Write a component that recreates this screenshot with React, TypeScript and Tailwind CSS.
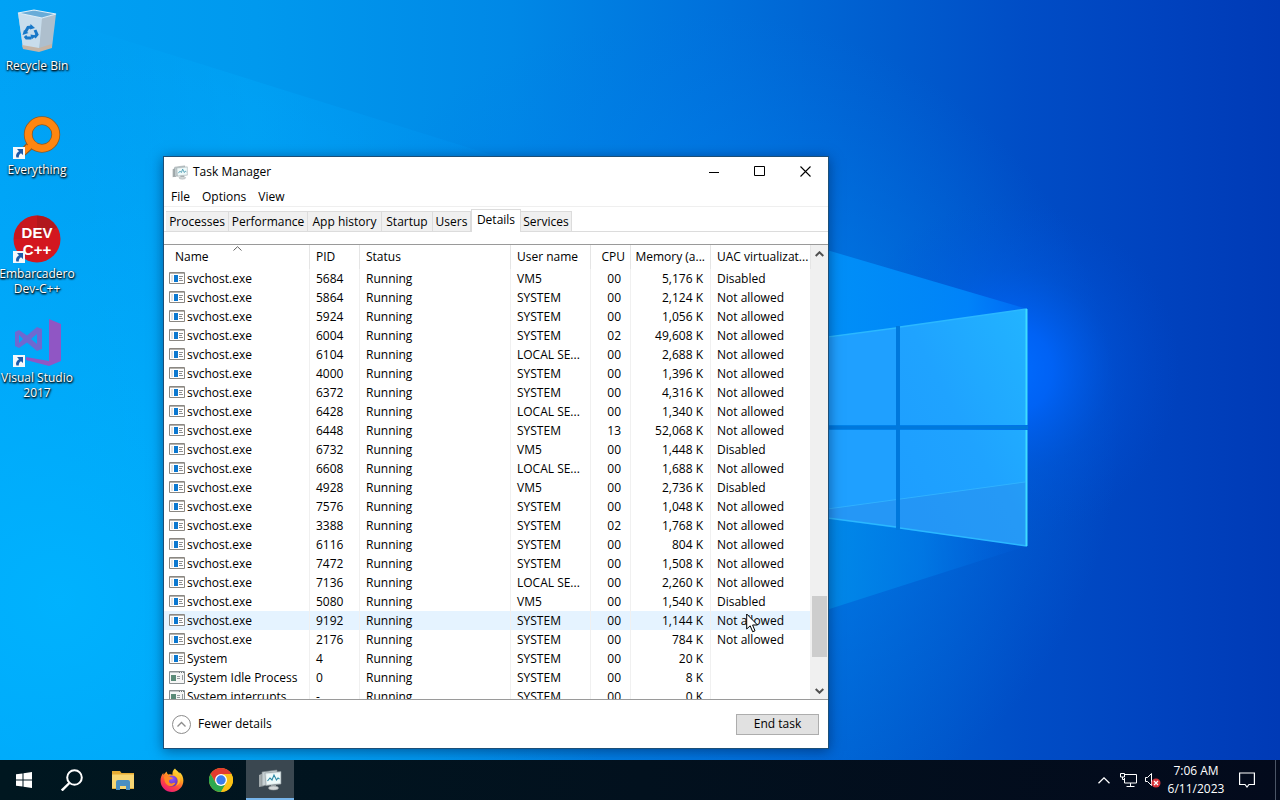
import type { ReactNode } from "react";

type Row = [name: string, pid: string, user: string, cpu: string, memory: string, uac: string];

const ROWS: Row[] = [
  ["svchost.exe", "5684", "VM5", "00", "5,176 K", "Disabled"],
  ["svchost.exe", "5864", "SYSTEM", "00", "2,124 K", "Not allowed"],
  ["svchost.exe", "5924", "SYSTEM", "00", "1,056 K", "Not allowed"],
  ["svchost.exe", "6004", "SYSTEM", "02", "49,608 K", "Not allowed"],
  ["svchost.exe", "6104", "LOCAL SE...", "00", "2,688 K", "Not allowed"],
  ["svchost.exe", "4000", "SYSTEM", "00", "1,396 K", "Not allowed"],
  ["svchost.exe", "6372", "SYSTEM", "00", "4,316 K", "Not allowed"],
  ["svchost.exe", "6428", "LOCAL SE...", "00", "1,340 K", "Not allowed"],
  ["svchost.exe", "6448", "SYSTEM", "13", "52,068 K", "Not allowed"],
  ["svchost.exe", "6732", "VM5", "00", "1,448 K", "Disabled"],
  ["svchost.exe", "6608", "LOCAL SE...", "00", "1,688 K", "Not allowed"],
  ["svchost.exe", "4928", "VM5", "00", "2,736 K", "Disabled"],
  ["svchost.exe", "7576", "SYSTEM", "00", "1,048 K", "Not allowed"],
  ["svchost.exe", "3388", "SYSTEM", "02", "1,768 K", "Not allowed"],
  ["svchost.exe", "6116", "SYSTEM", "00", "804 K", "Not allowed"],
  ["svchost.exe", "7472", "SYSTEM", "00", "1,508 K", "Not allowed"],
  ["svchost.exe", "7136", "LOCAL SE...", "00", "2,260 K", "Not allowed"],
  ["svchost.exe", "5080", "VM5", "00", "1,540 K", "Disabled"],
  ["svchost.exe", "9192", "SYSTEM", "00", "1,144 K", "Not allowed"],
  ["svchost.exe", "2176", "SYSTEM", "00", "784 K", "Not allowed"],
  ["System", "4", "SYSTEM", "00", "20 K", ""],
  ["System Idle Process", "0", "SYSTEM", "00", "8 K", ""],
  ["System interrupts", "-", "SYSTEM", "00", "0 K", ""],
];

const TABS = [
  { label: "Processes", width: "w-[63px]" },
  { label: "Performance", width: "w-[79px]" },
  { label: "App history", width: "w-[74px]" },
  { label: "Startup", width: "w-[51px]" },
  { label: "Users", width: "w-[38px]" },
  { label: "Details", width: "w-[50px]" },
  { label: "Services", width: "w-[51px]" },
];

function Wallpaper() {
  return (
    <svg
      className="absolute inset-0 h-full w-full"
      viewBox="0 0 1280 800"
      preserveAspectRatio="none"
      aria-hidden="true"
    >
      <defs>
        <linearGradient id="base" x1="0" y1="0" x2="1" y2="0">
          <stop offset="0" stopColor="#00a2f5" />
          <stop offset="0.2" stopColor="#0099ee" />
          <stop offset="0.4" stopColor="#0088e6" />
          <stop offset="0.55" stopColor="#0072dc" />
          <stop offset="0.7" stopColor="#005cce" />
          <stop offset="0.8" stopColor="#004dc6" />
          <stop offset="0.9" stopColor="#0043bf" />
          <stop offset="1" stopColor="#003ab6" />
        </linearGradient>
        <radialGradient id="cyan" gradientUnits="userSpaceOnUse" cx="60" cy="600" r="560">
          <stop offset="0" stopColor="#00b4ff" stopOpacity="0.9" />
          <stop offset="1" stopColor="#00acff" stopOpacity="0" />
        </radialGradient>
        <radialGradient id="mid" gradientUnits="userSpaceOnUse" cx="700" cy="430" r="420">
          <stop offset="0" stopColor="#0090f5" stopOpacity="0.9" />
          <stop offset="1" stopColor="#0078ea" stopOpacity="0" />
        </radialGradient>
        <radialGradient id="glow" gradientUnits="userSpaceOnUse" cx="1010" cy="370" r="170">
          <stop offset="0" stopColor="#006cff" stopOpacity="1" />
          <stop offset="0.25" stopColor="#0066ff" stopOpacity="0.8" />
          <stop offset="0.6" stopColor="#005ae8" stopOpacity="0.3" />
          <stop offset="1" stopColor="#0050d8" stopOpacity="0" />
        </radialGradient>
        <linearGradient id="beam" gradientUnits="userSpaceOnUse" x1="830" y1="0" x2="1027" y2="0">
          <stop offset="0" stopColor="#0092fa" stopOpacity="0.9" />
          <stop offset="0.7" stopColor="#008cff" stopOpacity="0.8" />
          <stop offset="1" stopColor="#0078ff" stopOpacity="0.5" />
        </linearGradient>
        <linearGradient id="farbeam" gradientUnits="userSpaceOnUse" x1="60" y1="0" x2="700" y2="0">
          <stop offset="0" stopColor="#00b0ff" stopOpacity="0" />
          <stop offset="0.3" stopColor="#00aeff" stopOpacity="0.3" />
          <stop offset="0.65" stopColor="#00a0ff" stopOpacity="0.15" />
          <stop offset="1" stopColor="#0090ff" stopOpacity="0" />
        </linearGradient>
        <linearGradient id="lower" gradientUnits="userSpaceOnUse" x1="820" y1="0" x2="1027" y2="0">
          <stop offset="0" stopColor="#008eea" stopOpacity="0.85" />
          <stop offset="0.5" stopColor="#0080ea" stopOpacity="0.6" />
          <stop offset="1" stopColor="#0060e0" stopOpacity="0.1" />
        </linearGradient>
        <linearGradient id="pane" x1="0" y1="1" x2="1" y2="0">
          <stop offset="0" stopColor="#1d9dff" />
          <stop offset="0.5" stopColor="#1fa3ff" />
          <stop offset="1" stopColor="#22b4ff" />
        </linearGradient>
      </defs>
      <rect width="1280" height="800" fill="url(#base)" />
      <rect width="1280" height="800" fill="url(#cyan)" />
      <rect width="1280" height="800" fill="url(#mid)" />
      <rect width="1280" height="800" fill="url(#glow)" />
      <path d="M60 20 460 145 700 220V700H0V60Z" fill="url(#farbeam)" />
      <path d="M820 248 1027 309 1027 546 820 518Z" fill="url(#beam)" />
      <path d="M820 517 1027 546 920 580 820 612Z" fill="url(#lower)" />
      <path d="M740 350 896 328V425H740ZM740 430H896V527L740 505Z" fill="#1fa0ff" />
      <path d="M900 327 1027 309V425H900ZM900 430H1027V546L900 528Z" fill="url(#pane)" />
      <path d="M820 510 1027 482V546L900 528 820 518Z" fill="#3088e4" opacity="0.35" />
      <path d="M820 510 1025 482" stroke="#35b6ff" strokeWidth="1" opacity="0.8" />
      <path d="M828 427.500H1028M898 326V530" stroke="#0078dc" strokeWidth="4" />
      <path d="M828 337 896 328M900 327 1027 309M828 518 896 527M900 528 1027 546" stroke="#2bb8ff" strokeWidth="1.500" />
      <path d="M1026.500 309V425M1026.500 430V546" stroke="#3fdcff" strokeWidth="2" />
    </svg>
  );
}

function ShortcutArrow() {
  return (
    <svg className="absolute bottom-0 left-0 h-3 w-3" viewBox="0 0 12 12" aria-hidden="true">
      <path d="M0 0h12v12H0z" fill="#f4f8fb" />
      <path d="M4 2h6v6L8 6.200C6.300 7.300 5.700 8.600 5.800 10.600H3.400C2.400 8 3.600 5.700 6 4.200Z" fill="#1d5aa8" />
    </svg>
  );
}

function RecycleBinIcon() {
  return (
    <svg className="h-12 w-12" viewBox="0 0 48 48" aria-hidden="true">
      <path d="M5 6 30 11 26 44 10 41Z" fill="#cfe0ec" />
      <path d="M5 6 30 11 27 44 10 41Z" fill="#c4dcec" opacity=".7" />
      <path d="M29 11 43 7 39 40 26 44Z" fill="#aebfcd" />
      <path d="M9 38 26 41 39 37V41L26 45 10 42Z" fill="#c5b5a6" />
      <path d="M5 6 21 3 43 7 29 11Z" fill="#69acd8" stroke="#e0eef7" strokeWidth="1.200" />
      <g fill="none" stroke="#1878c8" strokeWidth="3">
        <path d="M12.500 25l2.500-4.500 4-.5M22 23l2 4.500-2.500 3M18 31h-4.500l-1.500-2" />
      </g>
      <path d="M17.500 17l4.500 4-5 1.500ZM23.500 28.500l-5 4-1-5ZM9.500 28l1.500-5 4.500 3Z" fill="#1878c8" />
    </svg>
  );
}

function EverythingIcon() {
  return (
    <svg className="h-12 w-12" viewBox="0 0 48 48" aria-hidden="true">
      <path d="M18 28 7 40l5 4 12-11" fill="#ff8412" stroke="#8e5a24" strokeWidth="1.200" />
      <circle cx="29" cy="23.500" r="13.800" fill="none" stroke="#8e5a24" strokeWidth="8.800" />
      <circle cx="29" cy="23.500" r="13.800" fill="none" stroke="#ff8610" strokeWidth="7.200" />
      <path d="M19.500 29 8 41l4 2 12-11Z" fill="#ff8610" />
    </svg>
  );
}

function DevCppIcon() {
  return (
    <svg className="h-12 w-12" viewBox="0 0 48 48" aria-hidden="true">
      <circle cx="24" cy="24" r="23.500" fill="#d3171f" />
      <path d="M24 .5a23.500 23.500 0 0 1 20 12L24 24Z" fill="#a31a1c" opacity=".7" />
      <path d="M1 24a23.500 23.500 0 0 1 23-23.500V24Z" fill="#c0191e" opacity=".6" />
      <g fill="#fff" fontFamily="'Liberation Sans', sans-serif" fontWeight="700" textAnchor="middle">
        <text x="24" y="23" fontSize="15">DEV</text>
        <text x="24" y="40" fontSize="15">C++</text>
      </g>
    </svg>
  );
}

function VisualStudioIcon() {
  return (
    <svg className="h-12 w-12" viewBox="0 0 48 48" aria-hidden="true">
      <path d="M36 0 48 5V42L36 47 13 41V38L36 42Z" fill="#9056c4" />
      <path fillRule="evenodd" d="M24 8 29 10V30L24 32 14 23.500 6 29 2 27V13L6 11 14 16.500ZM24 15 18 20 24 25ZM6 16V24L10 20Z" fill="#6f68d0" />
    </svg>
  );
}

function ProcessIcon({ system }: { system: boolean }) {
  if (system) {
    return (
      <svg className="h-[13px] w-4 shrink-0" viewBox="0 0 16 13" aria-hidden="true">
        <path d="M.5 .5h15v12H.5z" fill="#f6f6f6" stroke="#8b9092" />
        <path d="M1 1.500h9" stroke="#c3c7c9" />
        <path d="M10 1.500h5" stroke="#70777a" strokeDasharray="1 1" />
        <path d="M2 4h5v6H2z" fill="#5b8a78" />
        <path d="M8 5.500h3M8 7.500h3M13.500 4v5" stroke="#949b9e" />
      </svg>
    );
  }
  return (
    <svg className="h-[13px] w-4 shrink-0" viewBox="0 0 16 13" aria-hidden="true">
      <path d="M.5 .5h15v11H.5z" fill="#fff" stroke="#8a8782" />
      <path d="M1 1.500h14" stroke="#b5b2ad" />
      <path d="M2 3h2v7H2z" fill="#e3e3e3" />
      <path d="M5 3h4v7H5z" fill="#0b78d0" />
      <path d="M10 4.500h4M10 6.500h3M10 8.500h4" stroke="#8f8f8f" />
    </svg>
  );
}

function MonitorIcon({ className }: { className: string }) {
  return (
    <svg className={className} viewBox="0 0 24 22" aria-hidden="true">
      <path d="M1 6 6 4V17L1 18Z" fill="#a3abad" />
      <path d="M4 3 19 1V14L4 17Z" fill="#c5cfd2" stroke="#7d888b" strokeWidth=".6" />
      <path d="M7 4 23 2.500V15L8 16.500Z" fill="#dfe8ea" stroke="#8c979a" strokeWidth=".6" />
      <path d="M8.500 5.200 22 4V13.800L9 15.200Z" fill="#eefafa" />
      <path d="M9.500 12 12 9l2 2 2-5 2.500 5 1.500-2 1.500 1" fill="none" stroke="#2b88a4" strokeWidth="1.100" />
      <path d="M13 16h5v2h-5z" fill="#9ba4a6" />
      <ellipse cx="15.500" cy="19" rx="5" ry="2" fill="#d3d8d9" stroke="#939b9d" strokeWidth=".6" />
    </svg>
  );
}

function DesktopShortcut({ label, shortcut = true, children }: { label: ReactNode; shortcut?: boolean; children: ReactNode }) {
  return (
    <button type="button" className="flex h-[104px] w-[74px] flex-col items-center pt-[7px]">
      <span className="relative block h-12 w-12">
        {children}
        {shortcut && <ShortcutArrow />}
      </span>
      <span className="mt-[3px] text-center text-[12px] leading-[15px] whitespace-nowrap text-white [text-shadow:1px_1px_2px_#000,0_1px_2px_#000]">
        {label}
      </span>
    </button>
  );
}

function TaskbarButton({ label, active = false, children }: { label: string; active?: boolean; children: ReactNode }) {
  return (
    <button
      type="button"
      aria-label={label}
      className={
        active
          ? "flex h-10 w-12 items-center justify-center border-b-2 border-[#76b4ea] bg-[#3a4750] pt-[2px]"
          : "flex h-10 w-12 items-center justify-center"
      }
    >
      {children}
    </button>
  );
}

function Scrollbar() {
  return (
    <div className="flex w-[17px] shrink-0 flex-col bg-[#f0f0f0]">
      <button type="button" aria-label="Scroll up" className="flex h-[17px] items-center justify-center">
        <svg className="h-[6px] w-[9px]" viewBox="0 0 9 6" fill="none" stroke="#505050" strokeWidth="2">
          <path d="M.7 5 4.500 1.300 8.300 5" />
        </svg>
      </button>
      <div className="grow-[334]" />
      <div className="mx-px h-[61px] bg-[#cdcdcd]" />
      <div className="grow-[25]" />
      <button type="button" aria-label="Scroll down" className="flex h-[17px] items-center justify-center">
        <svg className="h-[6px] w-[9px]" viewBox="0 0 9 6" fill="none" stroke="#505050" strokeWidth="2">
          <path d="M.7 1 4.500 4.700 8.300 1" />
        </svg>
      </button>
    </div>
  );
}

function ProcessTable() {
  const head = "border-r border-[#e5e5e5] p-0 font-normal whitespace-nowrap";
  const cell = "border-r border-[#f0f0f0] p-0 whitespace-nowrap";
  return (
    <table className="h-max w-full table-fixed border-separate border-spacing-0 text-left">
      <colgroup>
        <col className="w-[146px]" />
        <col className="w-[50px]" />
        <col className="w-[151px]" />
        <col className="w-[80px]" />
        <col className="w-[40px]" />
        <col className="w-[80px]" />
        <col />
      </colgroup>
      <thead>
        <tr className="h-6">
          <th className={`${head} relative pl-[11px]`} aria-sort="ascending">
            Name
            <svg className="absolute top-px left-[69px] h-[5px] w-[9px]" viewBox="0 0 9 5" fill="none" stroke="#606060" aria-hidden="true">
              <path d="M.5 4.500 4.500 .700 8.500 4.500" />
            </svg>
          </th>
          <th className={`${head} pl-[6px]`}>PID</th>
          <th className={`${head} pl-[6px]`}>Status</th>
          <th className={`${head} pl-[6px]`}>User name</th>
          <th className={`${head} pr-[5px] text-right`}>CPU</th>
          <th className={`${head} pr-[5px] text-right`}>Memory (a...</th>
          <th className={`${head} pl-[6px]`}>UAC virtualizat...</th>
        </tr>
      </thead>
      <tbody>
        {ROWS.map(([name, pid, user, cpu, memory, uac]) => (
          <tr key={pid} className={pid === "9192" ? "h-[19px] bg-[#e5f3ff]" : "h-[19px]"}>
            <td className={cell}>
              <span className="flex items-center gap-[2px] pl-[5px]">
                <ProcessIcon system={name.startsWith("System ")} />
                {name}
              </span>
            </td>
            <td className={`${cell} pl-[6px]`}>{pid}</td>
            <td className={`${cell} pl-[6px]`}>Running</td>
            <td className={`${cell} pl-[6px]`}>{user}</td>
            <td className={`${cell} pr-[9px] text-right`}>{cpu}</td>
            <td className={`${cell} pr-[7px] text-right`}>{memory}</td>
            <td className={`${cell} pl-[6px]`}>{uac}</td>
          </tr>
        ))}
      </tbody>
    </table>
  );
}

function TaskManager() {
  return (
    <section
      aria-label="Task Manager"
      className="absolute top-[156px] left-[163px] flex h-[593px] w-[666px] flex-col border border-[#1c4f78] bg-white shadow-[0_2px_12px_rgba(0,20,60,0.5)]"
    >
      <header className="flex h-[30px] shrink-0 items-center pl-2">
        <MonitorIcon className="h-[15px] w-4" />
        <h1 className="ml-[5px] flex-1 text-[12px]">Task Manager</h1>
        <button type="button" aria-label="Minimize" className="flex h-full w-[45px] items-center justify-center pb-[2px]">
          <svg className="h-[11px] w-[11px]" viewBox="0 0 11 11" stroke="#000"><path d="M0 6.500h10" /></svg>
        </button>
        <button type="button" aria-label="Maximize" className="flex h-full w-[45px] items-center justify-center pb-[2px]">
          <svg className="h-[11px] w-[11px]" viewBox="0 0 11 11" fill="none" stroke="#000"><path d="M.5 .5h10v9h-10z" /></svg>
        </button>
        <button type="button" aria-label="Close" className="flex h-full w-[46px] items-center justify-center pb-[2px]">
          <svg className="h-[11px] w-[11px]" viewBox="0 0 11 11" stroke="#000" strokeWidth="1.100"><path d="M.5 .5l10 10M10.500 .5l-10 10" /></svg>
        </button>
      </header>
      <nav className="flex h-5 shrink-0 items-center gap-3 border-b border-[#efefef] pl-[7px]">
        <button type="button">File</button>
        <button type="button">Options</button>
        <button type="button">View</button>
      </nav>
      <div role="tablist" className="flex h-[25px] shrink-0 items-end border-b border-[#dcdcdc] pl-[2px]">
        {TABS.map(({ label, width }) =>
          label === "Details" ? (
            <button key={label} type="button" role="tab" aria-selected="true" className={`${width} -mb-px flex h-[23px] items-center justify-center border-x border-t border-[#dcdcdc] bg-white pb-[2px] whitespace-nowrap`}>
              {label}
            </button>
          ) : (
            <button key={label} type="button" role="tab" aria-selected="false" className={`${width} flex h-5 items-center justify-center border-t border-r border-[#dcdcdc] bg-[#f0f0f0] whitespace-nowrap`}>
              {label}
            </button>
          ),
        )}
      </div>
      <div className="mt-3 flex min-h-0 flex-1 overflow-hidden border-y border-[#9a9a9a]">
        <div className="min-w-0 flex-1 overflow-hidden">
          <ProcessTable />
        </div>
        <Scrollbar />
      </div>
      <footer className="flex h-12 shrink-0 items-center justify-between pr-[9px] pl-2">
        <button type="button" className="flex items-center gap-[7px]">
          <svg className="h-[19px] w-[19px]" viewBox="0 0 19 19" fill="none" stroke="#8c8c8c" aria-hidden="true">
            <circle cx="9.500" cy="9.500" r="9" />
            <path d="M5.500 11.500 9.500 7.500 13.500 11.500" strokeWidth="1.300" />
          </svg>
          Fewer details
        </button>
        <button type="button" className="h-[21px] w-[83px] border border-[#adadad] bg-[#e1e1e1]">End task</button>
      </footer>
    </section>
  );
}

function Taskbar() {
  return (
    <footer className="relative flex h-10 shrink-0 items-center bg-linear-to-r from-[#001720] via-[#02111e] to-[#030a1c] text-[12px] text-white">
      <div className="flex">
        <TaskbarButton label="Start">
          <svg className="h-4 w-4" viewBox="0 0 16 16" fill="#fff"><path d="M0 2.300 6.500 1.400V7.500H0ZM7.500 1.200 16 0V7.500H7.500ZM0 8.500H6.500V14.600L0 13.700ZM7.500 8.500H16V16L7.500 14.800Z" /></svg>
        </TaskbarButton>
        <TaskbarButton label="Search">
          <svg className="h-[22px] w-[22px]" viewBox="0 0 22 22" fill="none" stroke="#fff" strokeWidth="2"><circle cx="13.500" cy="8.500" r="7.300" /><path d="M8.400 14 .8 21.500" strokeWidth="2.400" /></svg>
        </TaskbarButton>
      </div>
      <div className="ml-[3px] flex gap-px">
        <TaskbarButton label="File Explorer">
          <svg className="h-5 w-[22px]" viewBox="0 0 22 20">
            <path d="M0 1h8l1.500 2H22v16H0Z" fill="#e6ac34" />
            <path d="M0 4.500h22V19H0Z" fill="#f8d673" />
            <path d="M4 20v-8q0-2 2-2h10q2 0 2 2v8h-4v-4H8v4Z" fill="#4a8fc2" />
            <path d="M0 18h4v1H0ZM18 18h4v1h-4Z" fill="#e2ad3a" />
          </svg>
        </TaskbarButton>
        <TaskbarButton label="Firefox">
          <svg className="h-6 w-6" viewBox="0 0 24 24">
            <defs>
              <linearGradient id="fox" x1=".8" y1="0" x2=".25" y2="1">
                <stop offset="0" stopColor="#fff044" />
                <stop offset=".35" stopColor="#ffa51f" />
                <stop offset=".65" stopColor="#ff4b3c" />
                <stop offset="1" stopColor="#e9147c" />
              </linearGradient>
              <radialGradient id="globe" cx=".5" cy=".3" r=".7">
                <stop offset="0" stopColor="#9059ff" />
                <stop offset="1" stopColor="#5a31b8" />
              </radialGradient>
            </defs>
            <path d="M15 .5c1 1.800 3.200 2.800 4.500 5 .1-.6 0-1-.1-1.600 2.600 2 4 5.300 4 8.600C23.400 18.800 18.300 24 12 24S.5 19 .5 12.700C.5 9.500 1.500 7 3.300 5l.3 2C4.500 5.500 5.500 4.500 6.800 3.500c0 1.400.6 2.300 1.500 3 1.500-.4 2.800-.3 4.200.3C12.200 4.500 13 2 15 .5Z" fill="url(#fox)" />
            <circle cx="12" cy="13" r="5.600" fill="url(#globe)" />
            <path d="M4 8.500C6.500 7.500 9 7.800 11.200 9.200L13 10c-.6 1.300-2.800 1-3.800 2.200-.8 1.300.4 3.300 2.300 3.300 1.600 0 2.500-1 4-.6-1.300 3-4.700 4-7.500 2.500C4.800 15.500 4.200 12 4 8.500Z" fill="#ff8a25" />
            <path d="M13 7c3 .7 5 3 5 6 0 2-.8 3.700-2 4.700 3-1 4.400-3.500 4.300-6.200-.2-2.500-1.600-4.600-3.500-6.200Z" fill="#ffc629" opacity=".8" />
          </svg>
        </TaskbarButton>
        <TaskbarButton label="Google Chrome">
          <svg className="h-6 w-6" viewBox="0 0 24 24">
            <circle cx="12" cy="12" r="12" fill="#fbc116" />
            <path d="M1.600 6A12 12 0 0 1 22.400 6L12 6.400 6.800 15Z" fill="#e33b2e" />
            <path d="M1.600 6A12 12 0 0 0 12 24L17.200 15 12 17.500 6.800 15Z" fill="#2da94f" />
            <path d="M22.400 6A12 12 0 0 1 12 24L17.200 15 15 6Z" fill="#fbc116" />
            <circle cx="12" cy="12" r="6" fill="#fff" />
            <circle cx="12" cy="12" r="4.700" fill="#3b7ded" />
          </svg>
        </TaskbarButton>
        <TaskbarButton label="Task Manager" active>
          <MonitorIcon className="h-[22px] w-6" />
        </TaskbarButton>
      </div>
      <div className="ml-auto flex items-center">
        <button type="button" aria-label="Show hidden icons" className="flex w-6 justify-center">
          <svg className="h-[7px] w-3" viewBox="0 0 12 7" fill="none" stroke="#fff" strokeWidth="1.300"><path d="M.5 6.300 6 .9 11.500 6.300" /></svg>
        </button>
        <button type="button" aria-label="Network" className="flex w-6 justify-center">
          <svg className="h-[14px] w-[17px]" viewBox="0 0 17 14" fill="none" stroke="#fff">
            <path d="M5 1.500h11.500v8.500H4.500V5M10.500 10v3M6.500 13.500h8M.5 .5h4v3.500h-4ZM2.500 4v2.500h2" />
          </svg>
        </button>
        <button type="button" aria-label="Volume muted" className="flex w-6 justify-center">
          <svg className="h-4 w-[17px]" viewBox="0 0 17 16">
            <path d="M1.500 5.500h2L7.500 1.500V13.500L3.500 9.500h-2Z" fill="none" stroke="#fff" />
            <circle cx="12" cy="11" r="4.500" fill="#d8343a" />
            <path d="M10 9l4 4M14 9l-4 4" stroke="#fff" strokeWidth="1.200" />
          </svg>
        </button>
        <button type="button" className="w-[64px] text-center leading-[18px]">
          <time className="block">7:06 AM</time>
          <time className="block">6/11/2023</time>
        </button>
        <button type="button" aria-label="Notifications" className="flex w-[38px] justify-center">
          <svg className="h-4 w-4" viewBox="0 0 16 16" fill="none" stroke="#fff" strokeWidth="1.200"><path d="M.6 1h14.800v11.500H10L8 15l-2-2.500H.6Z" /></svg>
        </button>
        <button type="button" aria-label="Show desktop" className="ml-[9px] h-10 w-[5px] border-l border-[#4b5566]" />
      </div>
    </footer>
  );
}

export default function App() {
  return (
    <main className="relative flex min-h-screen flex-col overflow-hidden bg-[#0078d7] font-['Open_Sans','Noto_Sans',sans-serif] text-[12px] leading-4 text-black">
      <Wallpaper />
      <div className="relative flex-1">
        <div className="flex w-[74px] flex-col">
          <DesktopShortcut label="Recycle Bin" shortcut={false}><RecycleBinIcon /></DesktopShortcut>
          <DesktopShortcut label="Everything"><EverythingIcon /></DesktopShortcut>
          <DesktopShortcut label={<>Embarcadero<br />Dev-C++</>}><DevCppIcon /></DesktopShortcut>
          <DesktopShortcut label={<>Visual Studio<br />2017</>}><VisualStudioIcon /></DesktopShortcut>
        </div>
        <TaskManager />
        <svg className="absolute top-[613px] left-[746px] h-[20px] w-[13px]" viewBox="0 0 13 20" aria-hidden="true">
          <path d="M.7 1V16L4.200 12.800 6.700 18.800 9 17.800 6.600 12H11.500Z" fill="#fff" stroke="#000" />
        </svg>
      </div>
      <Taskbar />
    </main>
  );
}
